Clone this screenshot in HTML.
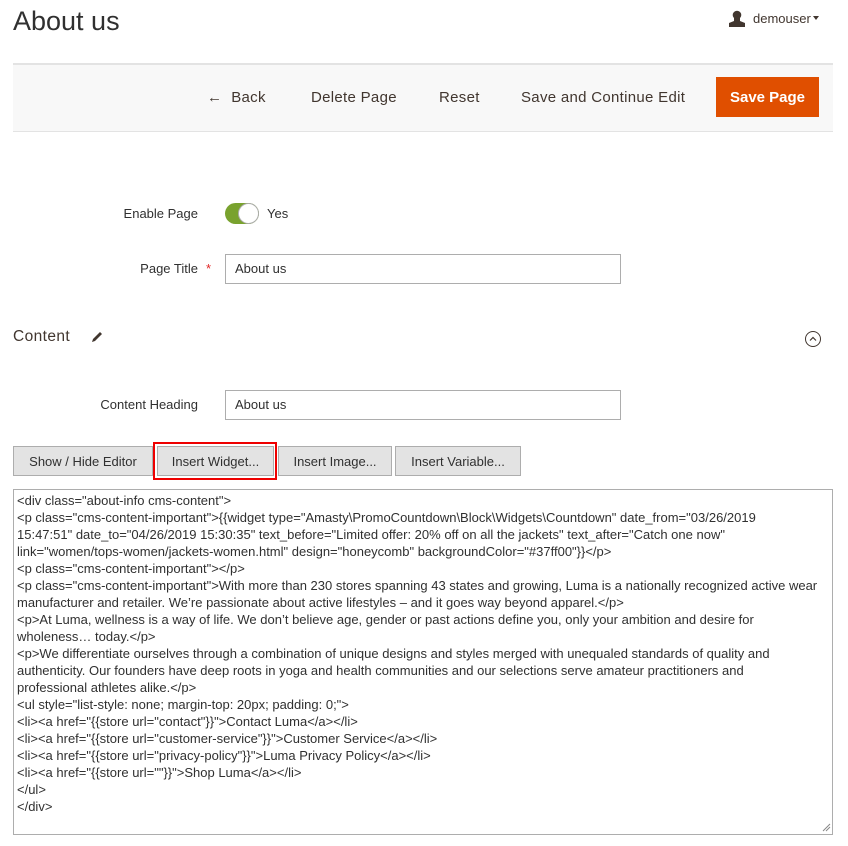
<!DOCTYPE html>
<html><head><meta charset="utf-8"><style>
*{box-sizing:border-box;margin:0;padding:0}
body{width:848px;height:846px;background:#fff;font-family:"Liberation Sans",sans-serif;color:#303030;position:relative;overflow:hidden}
.a{position:absolute}
.bar{left:13px;top:63px;width:820px;height:69px;background:#f8f8f8;border-top:2px solid #e3e3e3;border-bottom:1px solid #e3e3e3}
.act{top:89px;font-size:15px;color:#41362f;letter-spacing:.3px}
.save{left:716px;top:77px;width:103px;height:40px;background:#e04f00;color:#fff;font-size:15px;font-weight:bold;text-align:center;line-height:42px}
.lbl{font-size:13px;color:#303030;text-align:right}
.inp{left:225px;width:396px;height:30px;border:1px solid #adadad;font-size:13px;padding-left:9px;line-height:28px}
.btn{top:446px;height:30px;background:#e3e3e3;border:1px solid #adadad;font-size:13px;color:#303030;text-align:center;line-height:29px}
.ta{left:13px;top:489px;width:820px;height:346px;border:1px solid #adadad;font-size:13px;line-height:17px;padding:2px 3px;white-space:pre;color:#303030;overflow:hidden}
</style></head><body>
<div class="a" style="left:13px;top:6px;font-size:27px;color:#303030">About us</div>
<svg class="a" style="left:728px;top:10px" width="18" height="17" viewBox="0 0 18 17"><circle cx="9" cy="5" r="4.3" fill="#41362f"/><path d="M6 8 L12 8 L12 11 L17 13 L17 17 L1 17 L1 13 L6 11Z" fill="#41362f"/></svg>
<div class="a" style="left:753px;top:11px;font-size:13px;color:#41362f">demouser</div>
<div class="a" style="left:813px;top:16px;width:0;height:0;border-left:3.5px solid transparent;border-right:3.5px solid transparent;border-top:4px solid #41362f"></div>
<div class="a bar"></div>
<div class="a act" style="left:207px">&#8592;&nbsp; Back</div>
<div class="a act" style="left:311px">Delete Page</div>
<div class="a act" style="left:439px">Reset</div>
<div class="a act" style="left:521px">Save and Continue Edit</div>
<div class="a save">Save Page</div>
<div class="a lbl" style="left:100px;width:98px;top:206px">Enable Page</div>
<div class="a" style="left:225px;top:203px;width:34px;height:21px;border-radius:11px;background:#79a22e"></div>
<div class="a" style="left:238px;top:203px;width:21px;height:21px;border-radius:50%;background:#fff;border:1px solid #adadad"></div>
<div class="a" style="left:267px;top:206px;font-size:13px">Yes</div>
<div class="a lbl" style="left:100px;width:98px;top:261px">Page Title</div>
<div class="a" style="left:206px;top:261px;font-size:13px;color:#e22626">*</div>
<div class="a inp" style="top:254px">About us</div>
<div class="a" style="left:13px;top:328px;font-size:15.5px;letter-spacing:.4px;color:#41362f">Content</div>
<svg class="a" style="left:90px;top:330px" width="14" height="14" viewBox="0 0 14 14"><path d="M2 12 L3 9 L10 2 L12 4 L5 11Z" fill="#41362f"/></svg>
<div class="a" style="left:805px;top:331px;width:16px;height:16px;border:1px solid #41362f;border-radius:50%"></div>
<svg class="a" style="left:805px;top:331px" width="16" height="16" viewBox="0 0 16 16"><path d="M5 9.5 L8 6.5 L11 9.5" fill="none" stroke="#41362f" stroke-width="1.2"/></svg>
<div class="a lbl" style="left:60px;width:138px;top:397px">Content Heading</div>
<div class="a inp" style="top:390px">About us</div>
<div class="a btn" style="left:13px;width:140px">Show / Hide Editor</div>
<div class="a btn" style="left:157px;width:117px">Insert Widget...</div>
<div class="a" style="left:153px;top:442px;width:124px;height:38px;border:2px solid #e00"></div>
<div class="a btn" style="left:278px;width:114px">Insert Image...</div>
<div class="a btn" style="left:395px;width:126px">Insert Variable...</div>
<div class="a ta">&lt;div class="about-info cms-content"&gt;
&lt;p class="cms-content-important"&gt;{{widget type="Amasty\PromoCountdown\Block\Widgets\Countdown" date_from="03/26/2019
15:47:51" date_to="04/26/2019 15:30:35" text_before="Limited offer: 20% off on all the jackets" text_after="Catch one now"
link="women/tops-women/jackets-women.html" design="honeycomb" backgroundColor="#37ff00"}}&lt;/p&gt;
&lt;p class="cms-content-important"&gt;&lt;/p&gt;
&lt;p class="cms-content-important"&gt;With more than 230 stores spanning 43 states and growing, Luma is a nationally recognized active wear
manufacturer and retailer. We’re passionate about active lifestyles – and it goes way beyond apparel.&lt;/p&gt;
&lt;p&gt;At Luma, wellness is a way of life. We don’t believe age, gender or past actions define you, only your ambition and desire for
wholeness… today.&lt;/p&gt;
&lt;p&gt;We differentiate ourselves through a combination of unique designs and styles merged with unequaled standards of quality and
authenticity. Our founders have deep roots in yoga and health communities and our selections serve amateur practitioners and
professional athletes alike.&lt;/p&gt;
&lt;ul style="list-style: none; margin-top: 20px; padding: 0;"&gt;
&lt;li&gt;&lt;a href="{{store url="contact"}}"&gt;Contact Luma&lt;/a&gt;&lt;/li&gt;
&lt;li&gt;&lt;a href="{{store url="customer-service"}}"&gt;Customer Service&lt;/a&gt;&lt;/li&gt;
&lt;li&gt;&lt;a href="{{store url="privacy-policy"}}"&gt;Luma Privacy Policy&lt;/a&gt;&lt;/li&gt;
&lt;li&gt;&lt;a href="{{store url=""}}"&gt;Shop Luma&lt;/a&gt;&lt;/li&gt;
&lt;/ul&gt;
&lt;/div&gt;</div>
<svg class="a" style="left:822px;top:823px" width="9" height="9"><path d="M1 8 L8 1 M4 8 L8 4" stroke="#888" stroke-width="1"/></svg>
</body></html>
